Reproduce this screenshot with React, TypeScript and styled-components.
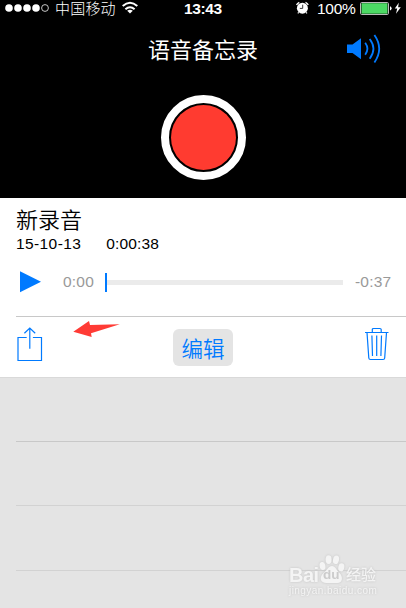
import React from "react";
import styled, { createGlobalStyle } from "styled-components";

const BLUE = "#007aff";
const latin = '"Liberation Sans", "Noto Sans CJK SC", sans-serif';
const chinese = '"Noto Sans CJK SC", sans-serif';

const GlobalStyle = createGlobalStyle`
  *, *::before, *::after { box-sizing: border-box; }
  body { margin: 0; background: #e4e4e4; overflow: hidden; }
  svg { display: block; }
`;

const Screen = styled.main`
  position: relative;
  display: flex;
  flex-direction: column;
  width: 406px;
  height: 608px;
  overflow: hidden;
  background: #e4e4e4;
  font-family: ${latin};
`;

const Header = styled.header`
  display: flex;
  flex-direction: column;
  align-items: center;
  height: 198px;
  background: #000;
  color: #fff;
`;

const StatusBar = styled.div`
  display: grid;
  grid-template-columns: 55px 67px 62px 111px 22px 43px 46px;
  grid-template-rows: 17px;
  align-items: center;
  width: 406px;
  height: 17px;
`;

const StatusText = styled.span<{ $bold?: boolean; $size?: number; $spacing?: number }>`
  font-size: ${(p) => p.$size ?? 16}px;
  font-weight: ${(p) => (p.$bold ? 700 : 400)};
  letter-spacing: ${(p) => p.$spacing ?? 0}px;
  line-height: 17px;
  white-space: nowrap;
`;

const Carrier = styled(StatusText)`
  font-weight: 300;
`;

const TitleBar = styled.div`
  display: grid;
  grid-template-columns: 1fr 110px 1fr;
  align-items: center;
  width: 406px;
  height: 64px;
`;

const Title = styled.h1`
  grid-column: 2;
  margin: 0 0 2px;
  font: 400 22px/30px ${chinese};
  white-space: nowrap;
`;

const SpeakerButton = styled.button`
  justify-self: end;
  margin-right: 23px;
  padding: 0;
  border: 0;
  background: none;
`;

const RecordButton = styled.button`
  width: 85px;
  height: 85px;
  margin-top: 14px;
  padding: 0;
  border: 8px solid #fff;
  border-radius: 50%;
  background: #000;
  display: grid;
  place-items: center;
`;

const RecordDisc = styled.span`
  width: 65px;
  height: 65px;
  border-radius: 50%;
  background: #ff3b30;
`;

const Recording = styled.section`
  display: flex;
  flex-direction: column;
  height: 118px;
  background: #fff;
  color: #000;
`;

const Name = styled.h2`
  margin: 5px 0 0 16px;
  font: 350 22px/30px ${chinese};
`;

const Details = styled.div`
  display: flex;
  gap: 25px;
  height: 20px;
  margin: 1px 0 0 16px;
  font-size: 15.5px;
  line-height: 20px;
`;

const DetailText = styled.span<{ $spacing: number }>`
  letter-spacing: ${(p) => p.$spacing}px;
  white-space: nowrap;
`;

const Player = styled.div`
  display: grid;
  grid-template-columns: 43px 42px 238px 12px 51px;
  align-items: center;
  height: 22px;
  margin: 17px 0 0 20px;
`;

const Time = styled.span`
  color: #999;
  font-size: 15.5px;
  letter-spacing: 0.2px;
  line-height: 20px;
  white-space: nowrap;
`;

const Remaining = styled(Time)`
  grid-column: 5;
`;

const Scrubber = styled.div`
  display: flex;
  align-items: center;
  height: 22px;
`;

const Playhead = styled.span`
  width: 2px;
  height: 19px;
  background: ${BLUE};
`;

const Track = styled.span`
  flex: 1;
  height: 5px;
  background: #ebebeb;
`;

const Divider = styled.hr<{ $color: string }>`
  flex: none;
  height: 1px;
  width: 390px;
  margin: 0 0 0 16px;
  border: 0;
  background: ${(p) => p.$color};
`;

const Actions = styled.section`
  display: grid;
  grid-template-columns: 57px 116px 60px 1fr;
  align-items: start;
  height: 61px;
  background: #fff;
  border-bottom: 1px solid #d9d9d9;
`;

const ActionsTop = styled.div`
  flex: none;
  background: #fff;
`;

const IconButton = styled.button<{ $end?: boolean }>`
  justify-self: ${(p) => (p.$end ? "end" : "start")};
  margin: ${(p) => (p.$end ? "10px 17px 0 0" : "9px 0 0 16px")};
  padding: 0;
  border: 0;
  background: none;
`;

const Pointer = styled.div`
  margin: 3px 0 0 15px;
`;

const EditButton = styled.button`
  width: 60px;
  height: 37px;
  margin-top: 12px;
  padding: 0;
  border: 0;
  border-radius: 6px;
  background: #e4e4e4;
  color: ${BLUE};
  font: 350 21.5px/37px ${chinese};
`;

const EmptyRow = styled.div<{ $height: number; $line: string }>`
  display: flex;
  align-items: flex-end;
  height: ${(p) => p.$height}px;
  &::after {
    content: "";
    height: 1px;
    width: 390px;
    margin-left: 16px;
    background: ${(p) => p.$line};
  }
`;

const Watermark = styled.div`
  position: absolute;
  left: 289px;
  top: 554px;
  width: 92px;
  color: #f4f4f4;
  filter: drop-shadow(0 0 0.8px #c2c2c2);
`;

const Brand = styled.div`
  display: grid;
  grid-template-columns: 29px 28px 32px;
  align-items: end;
  height: 31px;
`;

const BrandLatin = styled.span`
  font: 700 20px/18px ${latin};
  letter-spacing: -0.5px;
  margin-bottom: 1px;
`;

const BrandChinese = styled.span`
  font: 500 15px/18px ${chinese};
  white-space: nowrap;
  margin-bottom: 2px;
`;

const PawMark = styled.div`
  position: relative;
  align-self: start;
`;

const PawText = styled.span`
  position: absolute;
  left: 5px;
  top: 13px;
  color: #cbcbcb;
  font: 700 13.5px/15px ${latin};
`;

const Domain = styled.div`
  font: 400 10px/12px ${latin};
  letter-spacing: 0.45px;
  white-space: nowrap;
`;

const Signal = () => (
  <svg width="50" height="17" viewBox="0 0 50 17" fill="#fff">
    {[9, 18, 27, 36].map((x) => (
      <circle key={x} cx={x} cy="8" r="3.8" />
    ))}
    <circle cx="45" cy="8" r="3.4" fill="none" stroke="#ddd" strokeWidth="0.9" />
  </svg>
);

const Wifi = () => (
  <svg width="17" height="17" viewBox="0 0 17 17" fill="none" stroke="#fff" strokeWidth="2">
    <path d="M0.7 6.1Q8 -0.7 15.3 6.1M3.4 9.3Q8 5.1 12.6 9.3" />
    <path d="M5.2 10.8Q8 8.9 10.8 10.8L8 13.6Z" fill="#fff" stroke="none" />
  </svg>
);

const Alarm = () => (
  <svg width="15" height="17" viewBox="0 0 15 17">
    <circle cx="7.4" cy="8.2" r="5.5" fill="#fff" />
    <path d="M1.5 4.9A7 7 0 0 1 4.3 2.3M10.5 2.3A7 7 0 0 1 13.3 4.9" stroke="#fff" strokeWidth="1.3" fill="none" />
    <path d="M3.7 12.3L2.8 13.4M11.1 12.3L12 13.4" stroke="#fff" strokeWidth="1.2" />
    <path d="M7.7 4.7V8.4H4.8" stroke="#222" strokeWidth="0.9" fill="none" />
  </svg>
);

const Battery = () => (
  <svg width="46" height="17" viewBox="0 0 46 17">
    <rect x="0.5" y="2.5" width="28" height="12" rx="1.2" fill="#000" stroke="#bbb" />
    <rect x="1.5" y="3.2" width="26" height="10.5" fill="#4cd964" />
    <path d="M30 6.2Q31.6 6.5 31.6 8.2T30 10.5Z" fill="#fff" />
    <path d="M38.8 2.8L34.8 8.6H37.2L36 13.7L40.8 7.3H38.1Z" fill="#fff" />
  </svg>
);

const Speaker = () => (
  <svg width="36" height="30" viewBox="0 0 36 30" fill="none" stroke={BLUE} strokeWidth="1.8">
    <path d="M0 10.5H5.5L14 4.3V25.2L5.5 19H0Z" fill={BLUE} stroke="none" />
    <path d="M18.2 8.8Q22.6 14.8 18.2 20.8M22.7 5Q30.2 14.8 22.7 24.7M27.4 1Q37 14.8 27.4 28.4" />
  </svg>
);

const Share = () => (
  <svg width="28" height="36" viewBox="0 0 28 36" fill="none" stroke={BLUE} strokeWidth="1.2">
    <path d="M10.7 11.5H2V34.5H25.5V11.5H16.9" />
    <path d="M13.8 22.8V2M8.4 7.2L13.8 2L19.2 7.2" />
  </svg>
);

const Trash = () => (
  <svg width="24" height="34" viewBox="0 0 24 34" fill="none" stroke={BLUE} strokeWidth="1.2">
    <path d="M0 5.5H23.5M7.3 5V2.5Q7.3 1.5 8.5 1.5H15Q16.2 1.5 16.2 2.5V5" />
    <path d="M2 5.5L3.8 31Q3.9 32.5 5.5 32.5H18Q19.6 32.5 19.7 31L21.5 5.5" />
    <path d="M6.9 8.5L7.5 29M11.7 8.5V29M16.5 8.5L15.9 29" />
  </svg>
);

const Paw = () => (
  <svg width="28" height="31" viewBox="0 0 28 31" fill="#f4f4f4">
    <ellipse cx="4.5" cy="12" rx="2.9" ry="4.1" transform="rotate(-12 4.5 12)" />
    <ellipse cx="10.6" cy="5.6" rx="3" ry="4.4" />
    <ellipse cx="18" cy="5.8" rx="3" ry="4.3" transform="rotate(12 18 5.8)" />
    <ellipse cx="23.3" cy="13.3" rx="3" ry="4.1" transform="rotate(12 23.3 13.3)" />
    <path d="M14 12C17.5 12 18.5 16.5 21.5 19C25.5 23 24.5 29 19.5 29H8.5C2 29 1 23 5.5 19C9.5 16 10 12 14 12Z" />
  </svg>
);

export default function App() {
  return (
    <>
      <GlobalStyle />
      <Screen>
        <Header>
          <StatusBar>
            <Signal />
            <Carrier $size={15} $spacing={0.2}>中国移动</Carrier>
            <Wifi />
            <StatusText $bold $size={15.5} $spacing={-0.35}>13:43</StatusText>
            <Alarm />
            <StatusText $size={15.5} $spacing={-0.3}>100%</StatusText>
            <Battery />
          </StatusBar>
          <TitleBar>
            <Title>语音备忘录</Title>
            <SpeakerButton aria-label="speaker"><Speaker /></SpeakerButton>
          </TitleBar>
          <RecordButton aria-label="record"><RecordDisc /></RecordButton>
        </Header>
        <Recording>
          <Name>新录音</Name>
          <Details>
            <DetailText $spacing={0.4}>15-10-13</DetailText>
            <DetailText $spacing={0.15}>0:00:38</DetailText>
          </Details>
          <Player>
            <svg width="22" height="22" viewBox="0 0 22 22"><path d="M0 0.3V21.3L21 10.8Z" fill={BLUE} /></svg>
            <Time>0:00</Time>
            <Scrubber><Playhead /><Track /></Scrubber>
            <Remaining>-0:37</Remaining>
          </Player>
        </Recording>
        <ActionsTop><Divider $color="#c8c8c8" /></ActionsTop>
        <Actions>
          <IconButton aria-label="share"><Share /></IconButton>
          <Pointer>
            <svg width="50" height="20" viewBox="0 0 50 20">
              <path d="M1.3 11.7L17 1L18 5L47.8 4.3L19 13.3L19.7 17Z" fill="#ff3b35" />
            </svg>
          </Pointer>
          <EditButton>编辑</EditButton>
          <IconButton $end aria-label="delete"><Trash /></IconButton>
        </Actions>
        <EmptyRow $height={64} $line="#c8c8c8" />
        <EmptyRow $height={64} $line="#d2d2d2" />
        <EmptyRow $height={65} $line="#d2d2d2" />
        <Watermark>
          <Brand>
            <BrandLatin>Bai</BrandLatin>
            <PawMark><Paw /><PawText>du</PawText></PawMark>
            <BrandChinese>经验</BrandChinese>
          </Brand>
          <Domain>jingyan.baidu.com</Domain>
        </Watermark>
      </Screen>
    </>
  );
}
